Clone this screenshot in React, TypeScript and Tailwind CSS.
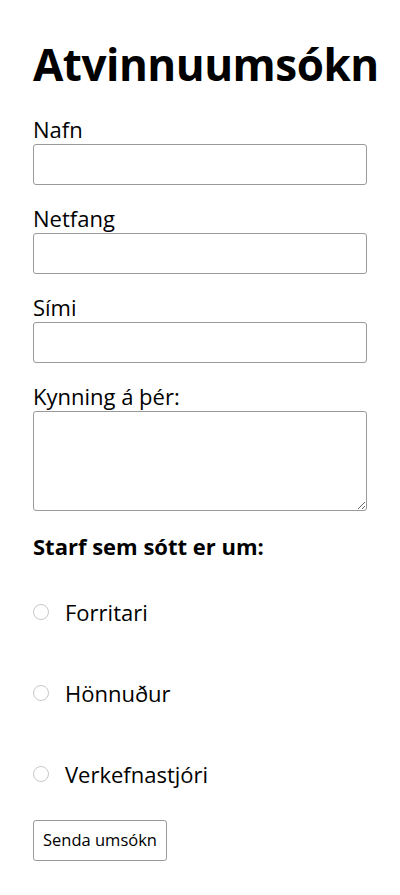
import React from "react";

export default function App() {
  const label = "block text-[22px] leading-[29px] text-black";
  const input = "block w-[334px] h-[41px] border border-[#9a9a9a] rounded-[3px] bg-white";
  return (
    <div className="min-h-[895px] bg-white px-[33px] pt-[34px] text-black" style={{ fontFamily: '"Open Sans", "Noto Sans", sans-serif' }}>
      <h1 className="text-[44px] leading-[60px] font-bold tracking-[-0.5px]">Atvinnuumsókn</h1>
      <form className="mt-[21px]">
        <label className={label}>Nafn</label>
        <input type="text" className={input} />
        <label className={`${label} mt-[19px]`}>Netfang</label>
        <input type="text" className={input} />
        <label className={`${label} mt-[19px]`}>Sími</label>
        <input type="text" className={input} />
        <label className={`${label} mt-[19px]`}>Kynning á þér:</label>
        <textarea className="block w-[334px] h-[100px] border border-[#9a9a9a] rounded-[3px] bg-white" />
        <div className="mt-[20px] text-[22px] font-bold leading-[30px]">Starf sem sótt er um:</div>
        <div className="mt-[36px] flex flex-col gap-[51px]">
          {["Forritari", "Hönnuður", "Verkefnastjóri"].map((t) => (
            <label key={t} className="flex items-center h-[30px] text-[22px]">
              <span className="w-[16px] h-[16px] rounded-full border border-[#c8c8c8] bg-white" />
              <span className="ml-[16px]">{t}</span>
            </label>
          ))}
        </div>
        <button type="button" className="mt-[31px] h-[41px] px-[9px] border border-[#9a9a9a] rounded-[3px] bg-white text-[16.5px]">
          Senda umsókn
        </button>
      </form>
    </div>
  );
}
